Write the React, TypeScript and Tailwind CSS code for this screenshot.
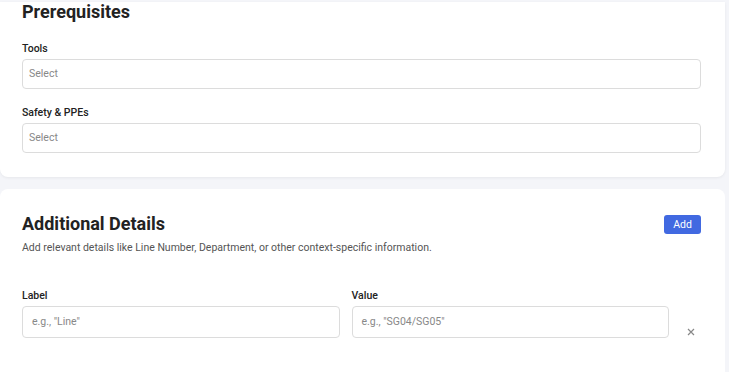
import React from "react";

function Field({ label, placeholder }: { label: string; placeholder: string }) {
  return (
    <div className="flex flex-col">
      <label className="text-[10.5px] leading-[14px] font-medium text-[#222]">{label}</label>
      <div className="mt-[3px] h-[30px] rounded-[4px] border border-[#dcdcdc] bg-white px-[6px] flex items-center text-[10.5px] text-[#888]">
        {placeholder}
      </div>
    </div>
  );
}

export default function App() {
  return (
    <div
      className="w-[729px] h-[372px] overflow-hidden bg-[#f4f5f9]"
      style={{ fontFamily: "Roboto, 'Liberation Sans', sans-serif" }}
    >
      <div className="pt-[5px] pr-1">
        <div className="bg-white rounded-b-lg shadow-[0_1px_3px_rgba(0,0,0,0.06)] pl-[22px] pr-6 pb-[24px]">
          <h2 className="text-[18px] leading-5 font-bold text-[#222] mt-[-3px]">Prerequisites</h2>
          <div className="mt-5">
            <Field label="Tools" placeholder="Select" />
          </div>
          <div className="mt-[17px]">
            <Field label="Safety & PPEs" placeholder="Select" />
          </div>
        </div>

        <div className="mt-3 bg-white rounded-lg pl-[22px] pr-6 pt-[21px] h-[200px]">
          <div className="flex items-center justify-between">
            <h2 className="text-[18px] leading-7 font-bold text-[#222]">Additional Details</h2>
            <button className="h-[19px] w-[37px] rounded-[3px] bg-[#4169e1] text-white text-[10.5px] leading-[19px] text-center">
              Add
            </button>
          </div>
          <p className="text-[10.5px] leading-[14px] text-[#555] mt-[3px]">
            Add relevant details like Line Number, Department, or other context-specific information.
          </p>
          <div className="mt-[34px] flex gap-3">
            <div className="flex-1 flex flex-col">
              <label className="text-[10.5px] leading-[14px] font-medium text-[#222]">Label</label>
              <div className="mt-[3px] h-[32px] rounded-[4px] border border-[#dcdcdc] px-[9px] flex items-center text-[10.5px] text-[#888]">
                e.g., "Line"
              </div>
            </div>
            <div className="flex-1 flex flex-col">
              <label className="text-[10.5px] leading-[14px] font-medium text-[#222]">Value</label>
              <div className="mt-[3px] h-[32px] rounded-[4px] border border-[#dcdcdc] px-[9px] flex items-center text-[10.5px] text-[#888]">
                e.g., "SG04/SG05"
              </div>
            </div>
            <button className="self-end w-[20px] h-[20px] mb-[-4px] flex items-center justify-center text-[#888]">
              <svg width="8" height="8" viewBox="0 0 8 8" stroke="currentColor" strokeWidth="1.2" fill="none">
                <path d="M1 1L7 7M7 1L1 7" />
              </svg>
            </button>
          </div>
        </div>
      </div>
    </div>
  );
}
